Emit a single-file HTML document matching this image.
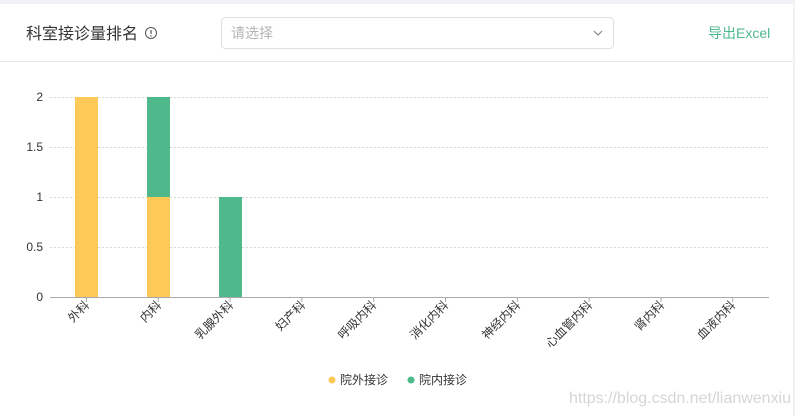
<!DOCTYPE html>
<html><head><meta charset="utf-8"><style>
html,body{margin:0;padding:0;width:795px;height:416px;overflow:hidden;background:#f0f2f5;font-family:"Liberation Sans","Noto Sans CJK SC",sans-serif;}
</style></head><body>
<svg width="795" height="416" xmlns="http://www.w3.org/2000/svg" style="position:absolute;left:0;top:0;font-family:'Liberation Sans','Noto Sans CJK SC',sans-serif">
<rect x="0" y="4" width="793" height="412" fill="#fff"/>
<line x1="0" y1="61.5" x2="793" y2="61.5" stroke="#e8e8e8"/>
<text x="26" y="39" font-size="16" fill="#333">科室接诊量排名</text>
<circle cx="151" cy="33" r="5.5" fill="none" stroke="#555" stroke-width="1"/>
<line x1="151" y1="30" x2="151" y2="34" stroke="#555" stroke-width="1.2"/>
<circle cx="151" cy="36" r="0.7" fill="#555"/>
<rect x="221.5" y="17.5" width="392" height="31" rx="4" fill="#fff" stroke="#dcdfe6"/>
<text x="231" y="38" font-size="14" fill="#b4b4b4">请选择</text>
<path d="M594 31 L598 35 L602 31" fill="none" stroke="#888" stroke-width="1.2"/>
<text x="708" y="38" font-size="14" fill="#4fb98c">导出Excel</text>
<g stroke="#d8d8d8" stroke-dasharray="2,2">
<line x1="50" y1="97.5" x2="769" y2="97.5"/><line x1="50" y1="147.5" x2="769" y2="147.5"/>
<line x1="50" y1="197.5" x2="769" y2="197.5"/><line x1="50" y1="247.5" x2="769" y2="247.5"/>
</g>
<g font-size="12" fill="#333" text-anchor="end">
<text x="43" y="101">2</text><text x="43" y="151">1.5</text><text x="43" y="201">1</text><text x="43" y="251">0.5</text><text x="43" y="301">0</text>
</g>
<rect x="75" y="97" width="23" height="200" fill="#fec957"/>
<rect x="147" y="97" width="23" height="100" fill="#4fb98c"/>
<rect x="147" y="197" width="23" height="100" fill="#fec957"/>
<rect x="219" y="197" width="23" height="100" fill="#4fb98c"/>
<line x1="50" y1="297.5" x2="769" y2="297.5" stroke="#aaa"/>
<g stroke="#aaa">
<line x1="86.5" y1="297" x2="86.5" y2="302"/><line x1="158.3" y1="297" x2="158.3" y2="302"/><line x1="230.1" y1="297" x2="230.1" y2="302"/><line x1="301.9" y1="297" x2="301.9" y2="302"/><line x1="373.7" y1="297" x2="373.7" y2="302"/><line x1="445.5" y1="297" x2="445.5" y2="302"/><line x1="517.3" y1="297" x2="517.3" y2="302"/><line x1="589.1" y1="297" x2="589.1" y2="302"/><line x1="660.9" y1="297" x2="660.9" y2="302"/><line x1="732.7" y1="297" x2="732.7" y2="302"/>
</g>
<g font-size="12" fill="#333" text-anchor="end">
<text transform="translate(90,306) rotate(-45)">外科</text>
<text transform="translate(162,306) rotate(-45)">内科</text>
<text transform="translate(234,306) rotate(-45)">乳腺外科</text>
<text transform="translate(306,306) rotate(-45)">妇产科</text>
<text transform="translate(377,306) rotate(-45)">呼吸内科</text>
<text transform="translate(449,306) rotate(-45)">消化内科</text>
<text transform="translate(521,306) rotate(-45)">神经内科</text>
<text transform="translate(593,306) rotate(-45)">心血管内科</text>
<text transform="translate(665,306) rotate(-45)">肾内科</text>
<text transform="translate(736,306) rotate(-45)">血液内科</text>
</g>
<circle cx="332" cy="380" r="3.5" fill="#fec957"/>
<text x="340" y="384" font-size="12" fill="#333">院外接诊</text>
<circle cx="411" cy="380" r="3.5" fill="#4fb98c"/>
<text x="419" y="384" font-size="12" fill="#333">院内接诊</text>
<text x="569" y="403" font-size="16" fill="#d6d6d6" textLength="222">https://blog.csdn.net/lianwenxiu</text>
</svg>
</body></html>
